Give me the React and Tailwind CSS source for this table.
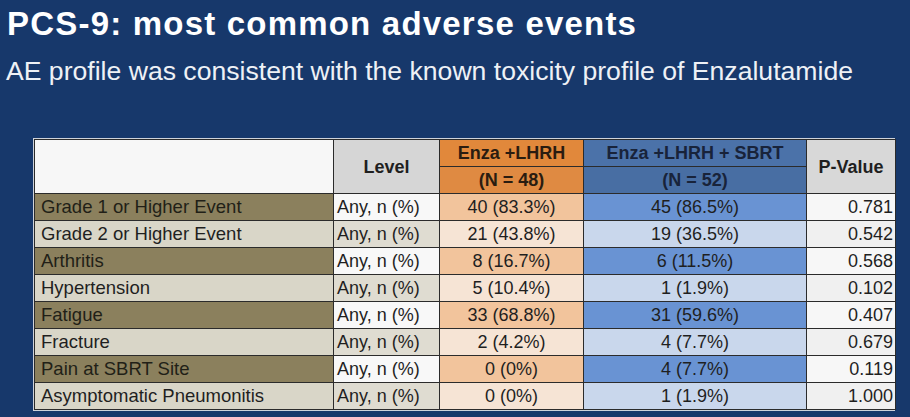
import React from "react";

const rows = [
  ["Grade 1 or Higher Event", "40 (83.3%)", "45 (86.5%)", "0.781"],
  ["Grade 2 or Higher Event", "21 (43.8%)", "19 (36.5%)", "0.542"],
  ["Arthritis", "8 (16.7%)", "6 (11.5%)", "0.568"],
  ["Hypertension", "5 (10.4%)", "1 (1.9%)", "0.102"],
  ["Fatigue", "33 (68.8%)", "31 (59.6%)", "0.407"],
  ["Fracture", "2 (4.2%)", "4 (7.7%)", "0.679"],
  ["Pain at SBRT Site", "0 (0%)", "4 (7.7%)", "0.119"],
  ["Asymptomatic Pneumonitis", "0 (0%)", "1 (1.9%)", "1.000"],
];

const cell = "border-[1.5px] border-[#2b2b2b] p-0";

function App() {
  return (
    <div className="w-[910px] h-[417px] bg-[#17386b] overflow-hidden font-['Liberation_Sans',Arial,sans-serif]">
      <h1 className="pt-[7px] pl-[7px] text-[33px] leading-[33px] font-bold tracking-[1.2px] text-white">
        PCS-9: most common adverse events
      </h1>
      <p className="mt-[18px] pl-[6px] text-[26.6px] leading-[26px] text-[#eef1f6]">
        AE profile was consistent with the known toxicity profile of Enzalutamide
      </p>

      <div className="mt-[54px] ml-[33px] w-[862px] border border-[#cfd3da]">
        <table className="w-full table-fixed border-collapse text-[18px] leading-none text-[#1f1f1f]">
          <colgroup>
            <col className="w-[299px]" />
            <col className="w-[106px]" />
            <col className="w-[144px]" />
            <col className="w-[223px]" />
            <col className="w-[89px]" />
          </colgroup>
          <thead>
            <tr className="h-[27px]">
              <th rowSpan={2} className={`${cell} bg-[#f7f7f7]`}></th>
              <th rowSpan={2} className={`${cell} bg-[#d6d6d6] font-bold`}>Level</th>
              <th className={`${cell} bg-[#e1883b] font-bold text-[#2a1c10]`}>Enza +LHRH</th>
              <th className={`${cell} bg-[#4b72a9] font-bold text-[#18233a]`}>Enza +LHRH + SBRT</th>
              <th rowSpan={2} className={`${cell} bg-[#d8d8d8] font-bold`}>P-Value</th>
            </tr>
            <tr className="h-[27px]">
              <th className={`${cell} bg-[#df8a42] font-bold text-[#2a1c10]`}>(N = 48)</th>
              <th className={`${cell} bg-[#486ea3] font-bold text-[#18233a]`}>(N = 52)</th>
            </tr>
          </thead>
          <tbody>
            {rows.map((r, i) => {
              const odd = i % 2 === 0;
              return (
                <tr key={r[0]} className="h-[27px]">
                  <td className={`${cell} pl-[6px] text-[18.5px] ${odd ? "bg-[#8b805d] text-[#211f17]" : "bg-[#d9d6c8]"}`}>{r[0]}</td>
                  <td className={`${cell} pl-[3px] ${odd ? "bg-[#f8f8f8]" : "bg-[#dfdcd1]"}`}>Any, n (%)</td>
                  <td className={`${cell} text-center ${odd ? "bg-[#f2c49c]" : "bg-[#f6e4d5]"}`}>{r[1]}</td>
                  <td className={`${cell} text-center ${odd ? "bg-[#6993d3]" : "bg-[#c9d7ec]"}`}>{r[2]}</td>
                  <td className={`${cell} text-right pr-[2px] ${odd ? "bg-[#f7f7f7]" : "bg-[#f0f0f0]"}`}>{r[3]}</td>
                </tr>
              );
            })}
          </tbody>
        </table>
      </div>
    </div>
  );
}

export default App;
